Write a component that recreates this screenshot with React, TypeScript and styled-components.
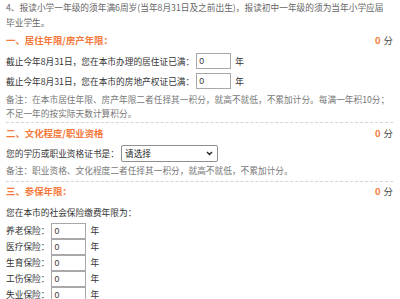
import { createGlobalStyle } from 'styled-components'
import styled from 'styled-components'

const GlobalStyle = createGlobalStyle`
  html, body {
    margin: 0;
    padding: 0;
    background: #fff;
  }
  body {
    font-family: "Noto Sans CJK SC", "Liberation Sans", sans-serif;
    font-size: 8.7px;
    color: #333;
  }
`

const Page = styled.div`
  width: 400px;
  box-sizing: border-box;
  padding: 0 7px 0 6px;
`

const Intro = styled.p`
  margin: 0;
  padding-right: 6px;
  line-height: 15px;
  color: #666;
`

const SectionHead = styled.div<{ $top: number }>`
  display: flex;
  justify-content: space-between;
  align-items: center;
  height: 14px;
  margin-top: ${p => p.$top}px;
`

const HeadTitle = styled.h3`
  margin: 0;
  font-size: 9.4px;
  font-weight: bold;
  color: #f5793b;
`

const Score = styled.span`
  font-size: 9.4px;
  color: #444;

  b {
    color: #f5793b;
    margin-right: 3px;
  }
`

const FieldRow = styled.div<{ $h: number }>`
  display: flex;
  align-items: center;
  height: ${p => p.$h}px;
`

const Label = styled.span`
  white-space: nowrap;
  margin-right: 2px;
`

const YearInput = styled.input`
  box-sizing: border-box;
  width: 35px;
  height: 16px;
  border: 1px solid #a9a9a9;
  padding: 0 2px;
  font-family: "Liberation Sans", sans-serif;
  font-size: 8.7px;
  color: #333;
  margin: 0 4px 0 0;
  outline: none;
`

const SelectBox = styled.div`
  position: relative;
  width: 97px;
  height: 17px;
`

const Select = styled.select`
  box-sizing: border-box;
  width: 100%;
  height: 100%;
  appearance: none;
  border: 1px solid #8f8f8f;
  border-radius: 2px;
  background: #fff;
  padding: 0 3px;
  font-family: "Noto Sans CJK SC", sans-serif;
  font-size: 8.7px;
  color: #222;
`

const Chevron = styled.svg`
  position: absolute;
  right: 5px;
  top: 6px;
  pointer-events: none;
`

const Note = styled.p<{ $top: number }>`
  margin: ${p => p.$top}px 0 0;
  line-height: 13.5px;
  color: #777;
`

const Divider = styled.hr<{ $top: number }>`
  margin: ${p => p.$top}px 0 0;
  border: 0;
  border-top: 1px dashed #d4d4d4;
  height: 0;
`

const Plain = styled.div`
  margin-top: 8px;
  line-height: 14px;
`

const FieldGroup = styled.div<{ $top: number }>`
  margin-top: ${p => p.$top}px;
`

const Section = ({ title, top }: { title: string; top: number }) => (
  <SectionHead $top={top}>
    <HeadTitle>{title}</HeadTitle>
    <Score><b>0</b>分</Score>
  </SectionHead>
)

const insurance = ['养老保险：', '医疗保险：', '生育保险：', '工伤保险：', '失业保险：']

export default function App() {
  return (
    <Page>
      <GlobalStyle />
      <Intro>
        4、报读小学一年级的须年满6周岁(当年8月31日及之前出生)，报读初中一年级的须为当年小学应届毕业学生。
      </Intro>

      <Section title="一、居住年限/房产年限：" top={3} />
      <FieldGroup $top={4}>
        <FieldRow $h={20}>
          <Label>截止今年8月31日，您在本市办理的居住证已满：</Label>
          <YearInput defaultValue="0" />
          年
        </FieldRow>
        <FieldRow $h={20}>
          <Label>截止今年8月31日，您在本市的房地产权证已满：</Label>
          <YearInput defaultValue="0" />
          年
        </FieldRow>
      </FieldGroup>
      <Note $top={2}>
        备注：在本市居住年限、房产年限二者任择其一积分，就高不就低，不累加计分。每满一年积10分；不足一年的按实际天数计算积分。
      </Note>
      <Divider $top={2} />

      <Section title="二、文化程度/职业资格" top={3} />
      <FieldGroup $top={3}>
        <FieldRow $h={20}>
          <Label>您的学历或职业资格证书是：</Label>
          <SelectBox>
            <Select defaultValue="">
              <option value="">请选择</option>
            </Select>
            <Chevron width="7" height="5" viewBox="0 0 7 5">
              <path d="M1 1 L3.5 3.5 L6 1" fill="none" stroke="#222" strokeWidth="1.4" />
            </Chevron>
          </SelectBox>
        </FieldRow>
      </FieldGroup>
      <Note $top={1}>备注：职业资格、文化程度二者任择其一积分，就高不就低，不累加计分。</Note>
      <Divider $top={3} />

      <Section title="三、参保年限：" top={2} />
      <Plain>您在本市的社会保险缴费年限为：</Plain>
      <FieldGroup $top={3}>
        {insurance.map(name => (
          <FieldRow $h={16} key={name}>
            <Label>{name}</Label>
            <YearInput defaultValue="0" />
            年
          </FieldRow>
        ))}
      </FieldGroup>
    </Page>
  )
}
